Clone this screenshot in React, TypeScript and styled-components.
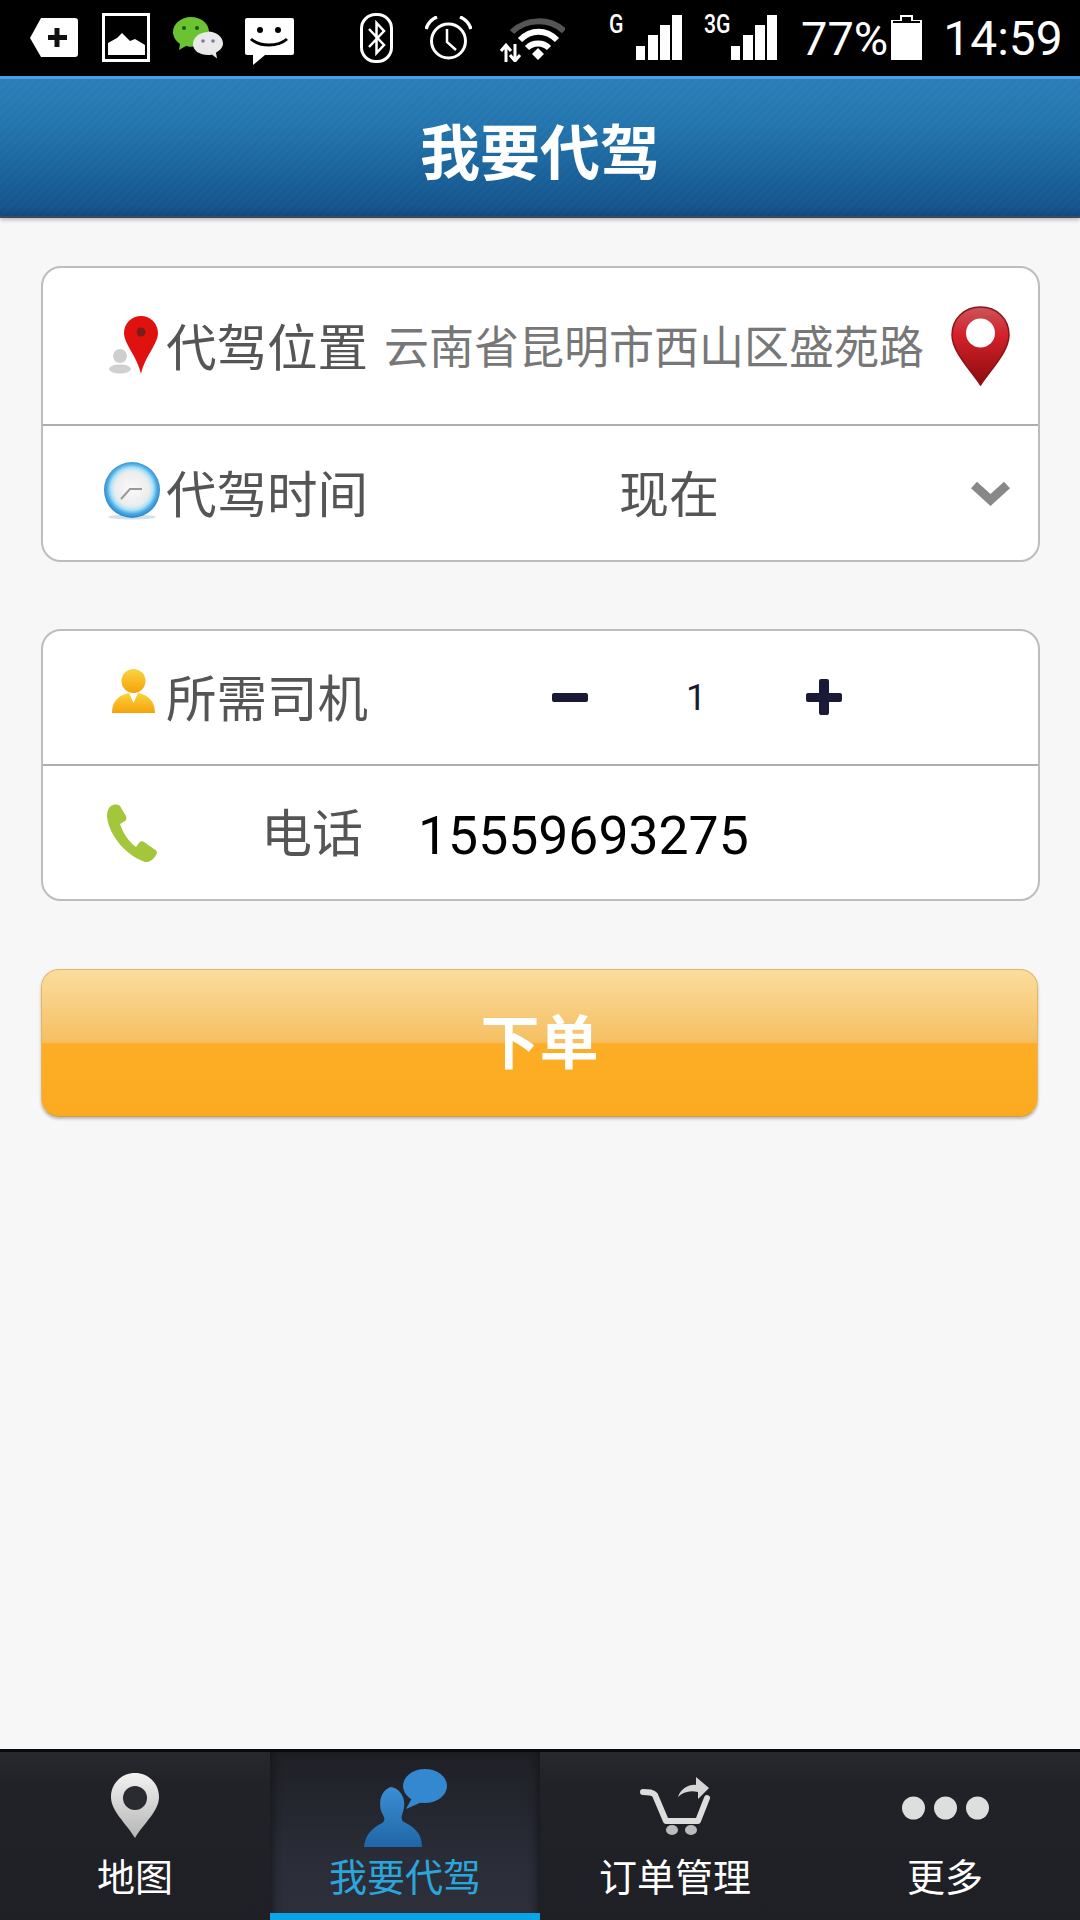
import styled, { createGlobalStyle } from "styled-components";

const CJK = `"Noto Sans CJK SC", "Noto Sans", sans-serif`;

const GlobalStyle = createGlobalStyle`
  html, body {
    margin: 0;
    padding: 0;
    background: #f7f7f7;
  }
  * {
    box-sizing: border-box;
  }
`;

const Page = styled.div`
  width: 1080px;
  height: 1920px;
  display: flex;
  flex-direction: column;
  overflow: hidden;
  background: #f7f7f7;
  font-family: ${CJK};
`;

const StatusBar = styled.div`
  height: 76px;
  flex-shrink: 0;
  display: flex;
  align-items: flex-start;
  padding-left: 30px;
  background: #000;
`;

const Glyph = styled.svg<{ $ml?: number; $mt?: number; $mb?: number }>`
  display: block;
  flex-shrink: 0;
  margin-left: ${(p) => p.$ml ?? 0}px;
  margin-top: ${(p) => p.$mt ?? 0}px;
  margin-bottom: ${(p) => p.$mb ?? 0}px;
`;

const NetworkLabel = styled.span<{ $ml: number; $w: number }>`
  width: ${(p) => p.$w}px;
  margin-left: ${(p) => p.$ml}px;
  margin-top: 10px;
  color: #fff;
  font: 500 25px/30px "Roboto", sans-serif;
  transform: scaleX(0.85);
  transform-origin: left center;
`;

const StatusText = styled.span<{ $ml: number; $size?: number }>`
  margin-left: ${(p) => p.$ml}px;
  margin-top: 11px;
  color: #fff;
  font: 400 ${(p) => p.$size ?? 47}px/56px "Roboto", sans-serif;
`;

const Header = styled.header`
  height: 142px;
  flex-shrink: 0;
  display: flex;
  align-items: center;
  justify-content: center;
  border-top: 3px solid #4b9ddf;
  border-bottom: 2px solid #3d4a5c;
  background:
    repeating-linear-gradient(135deg, rgba(255, 255, 255, 0.012) 0 3px, rgba(0, 0, 0, 0.012) 3px 6px),
    linear-gradient(#2a7fb9, #2375ae 35%, #15568f 92%, #124a80);
  box-shadow: 0 2px 4px rgba(0, 0, 0, 0.25);
`;

const Title = styled.h1`
  margin: 2px 0 0;
  color: #fff;
  font-size: 60px;
  font-weight: 700;
  line-height: 1;
`;

const Main = styled.main`
  flex: 1;
  display: flex;
  flex-direction: column;
  padding: 48px 0 0 41px;
`;

const Card = styled.section<{ $mb: number }>`
  width: 999px;
  margin-bottom: ${(p) => p.$mb}px;
  border: 2px solid #bdbdbd;
  border-radius: 20px;
  background: #fff;
  overflow: hidden;
`;

const Row = styled.div<{ $h: number; $divided?: boolean }>`
  height: ${(p) => p.$h}px;
  display: flex;
  align-items: center;
  padding-right: 28px;
  border-bottom: ${(p) => (p.$divided ? "2px solid #aeaeae" : "none")};
`;

const IconSlot = styled.div`
  width: 123px;
  flex-shrink: 0;
  display: flex;
  align-items: center;
`;

const Label = styled.span`
  width: 204px;
  flex-shrink: 0;
  margin-bottom: 4px;
  color: #555;
  font-size: 50.5px;
  line-height: 1;
  white-space: nowrap;
`;

const PhoneLabel = styled(Label)`
  width: 197px;
  font-size: 51px;
  text-align: right;
`;

const Address = styled.span`
  margin-left: 14px;
  margin-bottom: 4px;
  color: #777;
  font-size: 45px;
  line-height: 1;
  white-space: nowrap;
`;

const TimeValue = styled.span`
  margin-left: 249px;
  margin-bottom: 4px;
  color: #555;
  font-size: 50px;
  line-height: 1;
`;

const PushRight = styled.div`
  margin-left: auto;
  display: flex;
`;

const Stepper = styled.div`
  display: flex;
  align-items: center;
  margin-left: 182px;
`;

const StepBar = styled.div`
  width: 36px;
  height: 9px;
  border-radius: 2px;
  background: #1a1a38;
`;

const StepPlus = styled(StepBar)`
  position: relative;
  margin-left: 92px;
  &::after {
    content: "";
    position: absolute;
    left: 13px;
    top: -14px;
    width: 10px;
    height: 36px;
    border-radius: 2px;
    background: #1a1a38;
  }
`;

const Count = styled.span`
  width: 36px;
  margin-left: 90px;
  color: #1a1a38;
  font: 400 36px/1 "Roboto", sans-serif;
  text-align: center;
`;

const PhoneNumber = styled.span`
  margin-left: 55px;
  margin-top: 6px;
  color: #000;
  font: 400 53.5px/1 "Roboto", sans-serif;
`;

const SubmitButton = styled.button`
  width: 997px;
  height: 148px;
  padding: 0 0 10px;
  border: 1px solid #e5b566;
  border-bottom-color: #cf9c4c;
  border-radius: 18px;
  color: #fff;
  font-family: ${CJK};
  font-size: 59px;
  font-weight: 700;
  background: linear-gradient(#fbdd9e, #f5bf62 49.5%, #fdae26 50.5%, #fbaa20);
  box-shadow: 0 2px 3px rgba(0, 0, 0, 0.25);
`;

const TabBar = styled.nav`
  height: 171px;
  flex-shrink: 0;
  display: flex;
  border-top: 3px solid #08090b;
  background: linear-gradient(#28292e, #212227 20%, #1f2025);
`;

const Tab = styled.div<{ $active?: boolean }>`
  position: relative;
  width: 270px;
  display: flex;
  flex-direction: column;
  align-items: center;
  color: ${(p) => (p.$active ? "#2ba6dc" : "#fff")};
  background: ${(p) => (p.$active ? "linear-gradient(#1f2026, #2b2e39 70%, #2d303b)" : "none")};
  box-shadow: ${(p) => (p.$active ? "inset 8px 0 10px -6px #15161a, inset -8px 0 10px -6px #15161a" : "none")};
  &::after {
    content: "";
    display: ${(p) => (p.$active ? "block" : "none")};
    position: absolute;
    left: 0;
    right: 0;
    bottom: 0;
    height: 7px;
    background: #0aa5e6;
  }
`;

const TabIconBox = styled.div`
  height: 96px;
  flex-shrink: 0;
  display: flex;
  align-items: flex-start;
`;

const TabLabel = styled.span`
  margin-top: 8px;
  font-size: 38px;
  line-height: 1;
  white-space: nowrap;
`;

const Signal = ({ ml }: { ml: number }) => (
  <Glyph $ml={ml} $mt={15} width="46" height="45" viewBox="0 0 46 45" fill="#fff">
    <rect x="0" y="31" width="9" height="14" />
    <rect x="12" y="20" width="10" height="25" />
    <rect x="24" y="10" width="10" height="35" />
    <rect x="36" y="0" width="10" height="45" />
  </Glyph>
);

const StatusIcons = () => (
  <>
    <Glyph $mt={17} width="48" height="40" viewBox="0 0 48 40">
      <path d="M11 1H45a3 3 0 0 1 3 3V37a3 3 0 0 1-3 3H11L0 21Z" fill="#fff" />
      <path d="M27 11V30M18 20.500H37" stroke="#111" strokeWidth="5" />
    </Glyph>
    <Glyph $ml={24} $mt={13} width="48" height="49" viewBox="0 0 48 49">
      <rect x="1.500" y="1.500" width="45" height="46" fill="#000" stroke="#fff" strokeWidth="3" />
      <path d="M6 42V30L15 25L20 20L28 28L33 26L43 32V42Z" fill="#fff" />
    </Glyph>
    <Glyph $ml={23} $mt={17} width="50" height="43" viewBox="0 0 50 43">
      <path d="M18 0C8 0 0 7 0 15c0 5 3 9 7 12l-1 6 7-4c2 .5 3 .7 5 .7 10 0 18-7 18-15S28 0 18 0Z" fill="#6cc331" />
      <circle cx="11" cy="11" r="2" fill="#1d5a10" />
      <circle cx="24" cy="11" r="2" fill="#1d5a10" />
      <path d="M35 15c-8 0-15 5-15 12s7 11 15 11c1.500 0 3 0 4-.500l5 4-1-6c4-2 7-5 7-9 0-7-7-12-15-12Z" fill="#e9e9e9" />
      <circle cx="30" cy="24" r="1.800" fill="#7a7aa0" />
      <circle cx="40" cy="24" r="1.800" fill="#7a7aa0" />
    </Glyph>
    <Glyph $ml={22} $mt={18} width="49" height="47" viewBox="0 0 49 47">
      <path d="M2 0H47a2 2 0 0 1 2 2V35a2 2 0 0 1-2 2H20L8 47V37H2a2 2 0 0 1-2-2V2a2 2 0 0 1 2-2Z" fill="#fff" />
      <circle cx="15" cy="12" r="3" fill="#000" />
      <circle cx="33" cy="12" r="3" fill="#000" />
      <path d="M6 21C15 29 33 29 42 21" fill="none" stroke="#000" strokeWidth="3" />
    </Glyph>
    <Glyph $ml={66} $mt={13} width="33" height="50" viewBox="0 0 33 50" fill="none" stroke="#fff">
      <rect x="1.500" y="1.500" width="30" height="47" rx="14" strokeWidth="3" />
      <path d="M9 16L24 32L16.500 40V10L24 18L9 34" strokeWidth="2.500" />
    </Glyph>
    <Glyph $ml={32} $mt={16} width="47" height="44" viewBox="0 0 47 44" fill="none" stroke="#fff" strokeWidth="3">
      <circle cx="23.500" cy="25" r="17" />
      <path d="M22 13V26L31 34" strokeWidth="2.500" />
      <path d="M1 13C3 7 7 3 12 1M46 13C44 7 40 3 35 1" strokeWidth="3.500" />
    </Glyph>
    <Glyph $ml={28} $mt={18} width="65" height="44" viewBox="0 0 65 44" fill="none">
      <path d="M12 14C26 0 50 0 64 13" stroke="#555" strokeWidth="6" />
      <path d="M20 22C31 11 46 11 57 22" stroke="#fff" strokeWidth="6" />
      <path d="M27 30C33 24 43 24 49 30" stroke="#fff" strokeWidth="6" />
      <path d="M32 36L38 30L44 36L38 42Z" fill="#fff" />
      <path d="M6 44V28M1 33L6 27L11 33M15 26V42M10 37L15 43L20 37" stroke="#fff" strokeWidth="3" />
    </Glyph>
    <NetworkLabel $ml={44} $w={15}>G</NetworkLabel>
    <Signal ml={12} />
    <NetworkLabel $ml={22} $w={27}>3G</NetworkLabel>
    <Signal ml={0} />
    <StatusText $ml={24}>77%</StatusText>
    <Glyph $ml={3} $mt={15} width="31" height="45" viewBox="0 0 31 45">
      <path d="M9 0H22V5H31V45H0V5H9Z" fill="#fff" />
      <path d="M11 2H20V6H29V8H2V6H11Z" fill="#000" />
    </Glyph>
    <StatusText $ml={21} $size={48}>14:59</StatusText>
  </>
);

const LocationIcon = () => (
  <Glyph $ml={66} $mb={2} width="50" height="58" viewBox="0 0 50 58">
    <circle cx="11" cy="40" r="7" fill="#cfcfcf" />
    <ellipse cx="11" cy="53" rx="11" ry="4.500" fill="#d0d0d0" />
    <path d="M32 0C23 0 15 7 15 17C15 28 28 40 32 58C36 40 49 28 49 17C49 7 41 0 32 0Z" fill="#e0120f" />
    <circle cx="32" cy="16" r="4.500" fill="#7c1b18" />
  </Glyph>
);

const ClockIcon = () => (
  <Glyph $ml={60} $mb={4} width="58" height="58" viewBox="0 0 58 58">
    <defs>
      <radialGradient id="clockFace" cx="50%" cy="48%" r="50%">
        <stop offset="0%" stopColor="#fafafa" />
        <stop offset="62%" stopColor="#ececec" />
        <stop offset="76%" stopColor="#a9e2f8" />
        <stop offset="90%" stopColor="#4aa8e0" />
        <stop offset="100%" stopColor="#2f8fcf" />
      </radialGradient>
    </defs>
    <ellipse cx="29" cy="55" rx="24" ry="2.500" fill="#d4e2e8" />
    <circle cx="29" cy="28" r="28" fill="url(#clockFace)" />
    <path d="M18 37L27 27H39" fill="none" stroke="#9a9a9a" strokeWidth="2" />
  </Glyph>
);

const RedPin = () => (
  <Glyph width="59" height="80" viewBox="0 0 59 80">
    <defs>
      <linearGradient id="redPin" x1="0" y1="0" x2="0" y2="1">
        <stop offset="0%" stopColor="#c9565c" />
        <stop offset="35%" stopColor="#d4222b" />
        <stop offset="100%" stopColor="#8c0b0d" />
      </linearGradient>
    </defs>
    <path
      d="M29.500 1C13 1 1 13 1 29C1 45 18 62 29.500 79C41 62 58 45 58 29C58 13 46 1 29.500 1Z"
      fill="url(#redPin)"
      stroke="#8e1216"
      strokeWidth="1.500"
    />
    <circle cx="29.500" cy="27" r="14.500" fill="#fff" />
  </Glyph>
);

const Chevron = () => (
  <Glyph width="39" height="27" viewBox="0 0 39 27">
    <path d="M3 5L19.500 20L36 5" fill="none" stroke="#888" strokeWidth="9" />
  </Glyph>
);

const DriverIcon = () => (
  <Glyph $ml={69} $mb={14} width="43" height="44" viewBox="0 0 43 44">
    <defs>
      <linearGradient id="driver" x1="0" y1="0" x2="0" y2="1">
        <stop offset="0%" stopColor="#fbd33d" />
        <stop offset="100%" stopColor="#f5a20c" />
      </linearGradient>
    </defs>
    <circle cx="21.500" cy="12" r="12" fill="url(#driver)" />
    <path d="M0 44C0 33 6 26 17 24L21.500 34L26 24C37 26 43 33 43 44Z" fill="url(#driver)" />
  </Glyph>
);

const PhoneIcon = () => (
  <Glyph $ml={64} width="50" height="58" viewBox="0 0 50 58">
    <path
      d="M6 1C2 2 0 7 0 12C1 28 16 50 38 58C43 59 48 54 50 49C50 47 49 46 47 45L37 38C35 37 33 37 32 39L29 43C22 38 16 29 13 20L18 17C19 16 20 14 19 12L13 2C12 1 9 0 6 1Z"
      fill="#a4c63a"
    />
  </Glyph>
);

const TabPin = () => (
  <Glyph $mt={21} width="48" height="65" viewBox="0 0 48 65">
    <defs>
      <linearGradient id="tabPin" x1="0" y1="0" x2="0" y2="1">
        <stop offset="0%" stopColor="#f2f2f2" />
        <stop offset="100%" stopColor="#b5b5b5" />
      </linearGradient>
    </defs>
    <path d="M24 0C11 0 0 10 0 24C0 38 15 50 24 65C33 50 48 38 48 24C48 10 37 0 24 0Z" fill="url(#tabPin)" />
    <circle cx="24" cy="25" r="12" fill="#2a2b30" />
  </Glyph>
);

const TabDriver = () => (
  <Glyph $mt={17} width="83" height="78" viewBox="0 0 83 78">
    <defs>
      <linearGradient id="tabDriver" x1="0" y1="0" x2="0" y2="1">
        <stop offset="0%" stopColor="#3b8fd4" />
        <stop offset="100%" stopColor="#1f66a6" />
      </linearGradient>
    </defs>
    <path d="M27 18C38 20 43 32 39 43C37 48 37 51 40 53C50 58 58 64 58 78H0C1 66 8 59 18 54C21 52 21 50 19 46C14 37 15 22 27 18Z" fill="url(#tabDriver)" />
    <ellipse cx="61" cy="17" rx="22" ry="17" fill="#3388cf" />
    <path d="M48 29L42 40L58 33Z" fill="#3388cf" />
  </Glyph>
);

const TabCart = () => (
  <Glyph $mt={22} width="70" height="62" viewBox="0 0 70 62">
    <path d="M3 18C9 18 13 18 15 21L26 47H58L67 24" fill="none" stroke="#ddd" strokeWidth="6" strokeLinecap="round" strokeLinejoin="round" />
    <ellipse cx="32" cy="56" rx="6" ry="5" fill="#bbb" />
    <ellipse cx="51" cy="56" rx="6" ry="5" fill="#bbb" />
    <path d="M38 23C41 14 50 10 56 11V3L69 14L58 25V18C50 16 43 18 38 23Z" fill="#d6d6d6" />
  </Glyph>
);

const TabDots = () => (
  <Glyph $mt={44} width="87" height="24" viewBox="0 0 87 24" fill="#dedede">
    <circle cx="11.500" cy="12" r="11.500" />
    <circle cx="43.500" cy="12" r="11.500" />
    <circle cx="75.500" cy="12" r="11.500" />
  </Glyph>
);

const tabs = [
  { label: "地图", icon: <TabPin /> },
  { label: "我要代驾", icon: <TabDriver />, active: true },
  { label: "订单管理", icon: <TabCart /> },
  { label: "更多", icon: <TabDots /> }
];

const App = () => {
  return (
    <Page>
      <GlobalStyle />
      <StatusBar>
        <StatusIcons />
      </StatusBar>
      <Header>
        <Title>我要代驾</Title>
      </Header>
      <Main>
        <Card $mb={67}>
          <Row $h={158} $divided>
            <IconSlot>
              <LocationIcon />
            </IconSlot>
            <Label>代驾位置</Label>
            <Address>云南省昆明市西山区盛苑路</Address>
            <PushRight>
              <RedPin />
            </PushRight>
          </Row>
          <Row $h={134}>
            <IconSlot>
              <ClockIcon />
            </IconSlot>
            <Label>代驾时间</Label>
            <TimeValue>现在</TimeValue>
            <PushRight>
              <Chevron />
            </PushRight>
          </Row>
        </Card>
        <Card $mb={68}>
          <Row $h={135} $divided>
            <IconSlot>
              <DriverIcon />
            </IconSlot>
            <Label>所需司机</Label>
            <Stepper>
              <StepBar />
              <Count>1</Count>
              <StepPlus />
            </Stepper>
          </Row>
          <Row $h={133}>
            <IconSlot>
              <PhoneIcon />
            </IconSlot>
            <PhoneLabel>电话</PhoneLabel>
            <PhoneNumber>15559693275</PhoneNumber>
          </Row>
        </Card>
        <SubmitButton>下单</SubmitButton>
      </Main>
      <TabBar>
        {tabs.map((tab) => (
          <Tab key={tab.label} $active={tab.active}>
            <TabIconBox>{tab.icon}</TabIconBox>
            <TabLabel>{tab.label}</TabLabel>
          </Tab>
        ))}
      </TabBar>
    </Page>
  );
};

export default App;
